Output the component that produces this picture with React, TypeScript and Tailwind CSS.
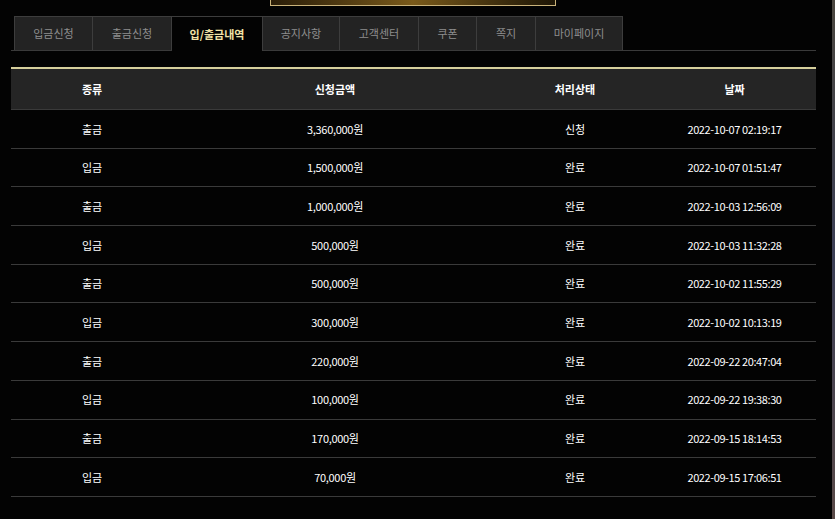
import React from 'react';

const tabs = ['입금신청', '출금신청', '입/출금내역', '공지사항', '고객센터', '쿠폰', '쪽지', '마이페이지'];
const tabWidths = ['w-[79px]', 'w-[79px]', 'w-[91px]', 'w-[77px]', 'w-[79px]', 'w-[58px]', 'w-[59px]', 'w-[87px]'];

const rows = [
  { type: '출금', amount: '3,360,000원', status: '신청', date: '2022-10-07 02:19:17' },
  { type: '입금', amount: '1,500,000원', status: '완료', date: '2022-10-07 01:51:47' },
  { type: '출금', amount: '1,000,000원', status: '완료', date: '2022-10-03 12:56:09' },
  { type: '입금', amount: '500,000원', status: '완료', date: '2022-10-03 11:32:28' },
  { type: '출금', amount: '500,000원', status: '완료', date: '2022-10-02 11:55:29' },
  { type: '입금', amount: '300,000원', status: '완료', date: '2022-10-02 10:13:19' },
  { type: '출금', amount: '220,000원', status: '완료', date: '2022-09-22 20:47:04' },
  { type: '입금', amount: '100,000원', status: '완료', date: '2022-09-22 19:38:30' },
  { type: '출금', amount: '170,000원', status: '완료', date: '2022-09-15 18:14:53' },
  { type: '입금', amount: '70,000원', status: '완료', date: '2022-09-15 17:06:51' },
];

export default function App() {
  return (
    <div
      className="relative w-[835px] h-[519px] overflow-hidden bg-[#030303] text-[11px]"
      style={{ fontFamily: '"Noto Sans CJK KR", "Noto Sans", sans-serif' }}
    >
      {/* right edge of page background */}
      <div className="absolute top-0 right-0 h-full w-[3px] bg-gradient-to-b from-[#4a463f] via-[#3b3e55] to-[#5a4a48]" />

      {/* banner bottom */}
      <div className="ml-[270px] w-[286px] h-[6px] border border-t-0 border-[#c9b27a] bg-gradient-to-r from-[#2a1d08] via-[#7a5a1a] to-[#1e1606]" />

      {/* tabs */}
      <div className="mt-[10px] ml-[11px] w-[805px] flex border-b border-[#3a3a3a]">
        <div className="w-[3px]" />
        {tabs.map((t, i) => {
          const active = i === 2;
          return (
            <div
              key={t}
              className={`${tabWidths[i]} h-[34px] flex items-center justify-center border-t border-r border-[#3d3d3d] ${
                i === 0 ? 'border-l' : ''
              } ${active ? 'bg-[#030303] text-[#f2e2a6] font-bold -mb-px h-[35px]' : 'bg-[#232323] text-[#8e8e8e]'}`}
            >
              {t}
            </div>
          );
        })}
      </div>

      {/* table */}
      <div className="mt-[16px] ml-[11px] w-[805px] border-t-2 border-[#d6cf9c]">
        <div className="flex h-[41px] items-center bg-[#252525] border-b border-[#3a3a3a] text-white font-bold">
          <div className="w-[162px] text-center">종류</div>
          <div className="w-[324px] text-center">신청금액</div>
          <div className="w-[156px] text-center">처리상태</div>
          <div className="w-[163px] text-center">날짜</div>
        </div>
        {rows.map((r, i) => (
          <div key={i} className="flex h-[38.7px] items-center border-b border-[#3a3a3a] text-white">
            <div className="w-[162px] text-center">{r.type}</div>
            <div className="w-[324px] text-center tracking-[-0.3px]">{r.amount}</div>
            <div className="w-[156px] text-center">{r.status}</div>
            <div className="w-[163px] text-center tracking-[-0.4px]">{r.date}</div>
          </div>
        ))}
      </div>
    </div>
  );
}
